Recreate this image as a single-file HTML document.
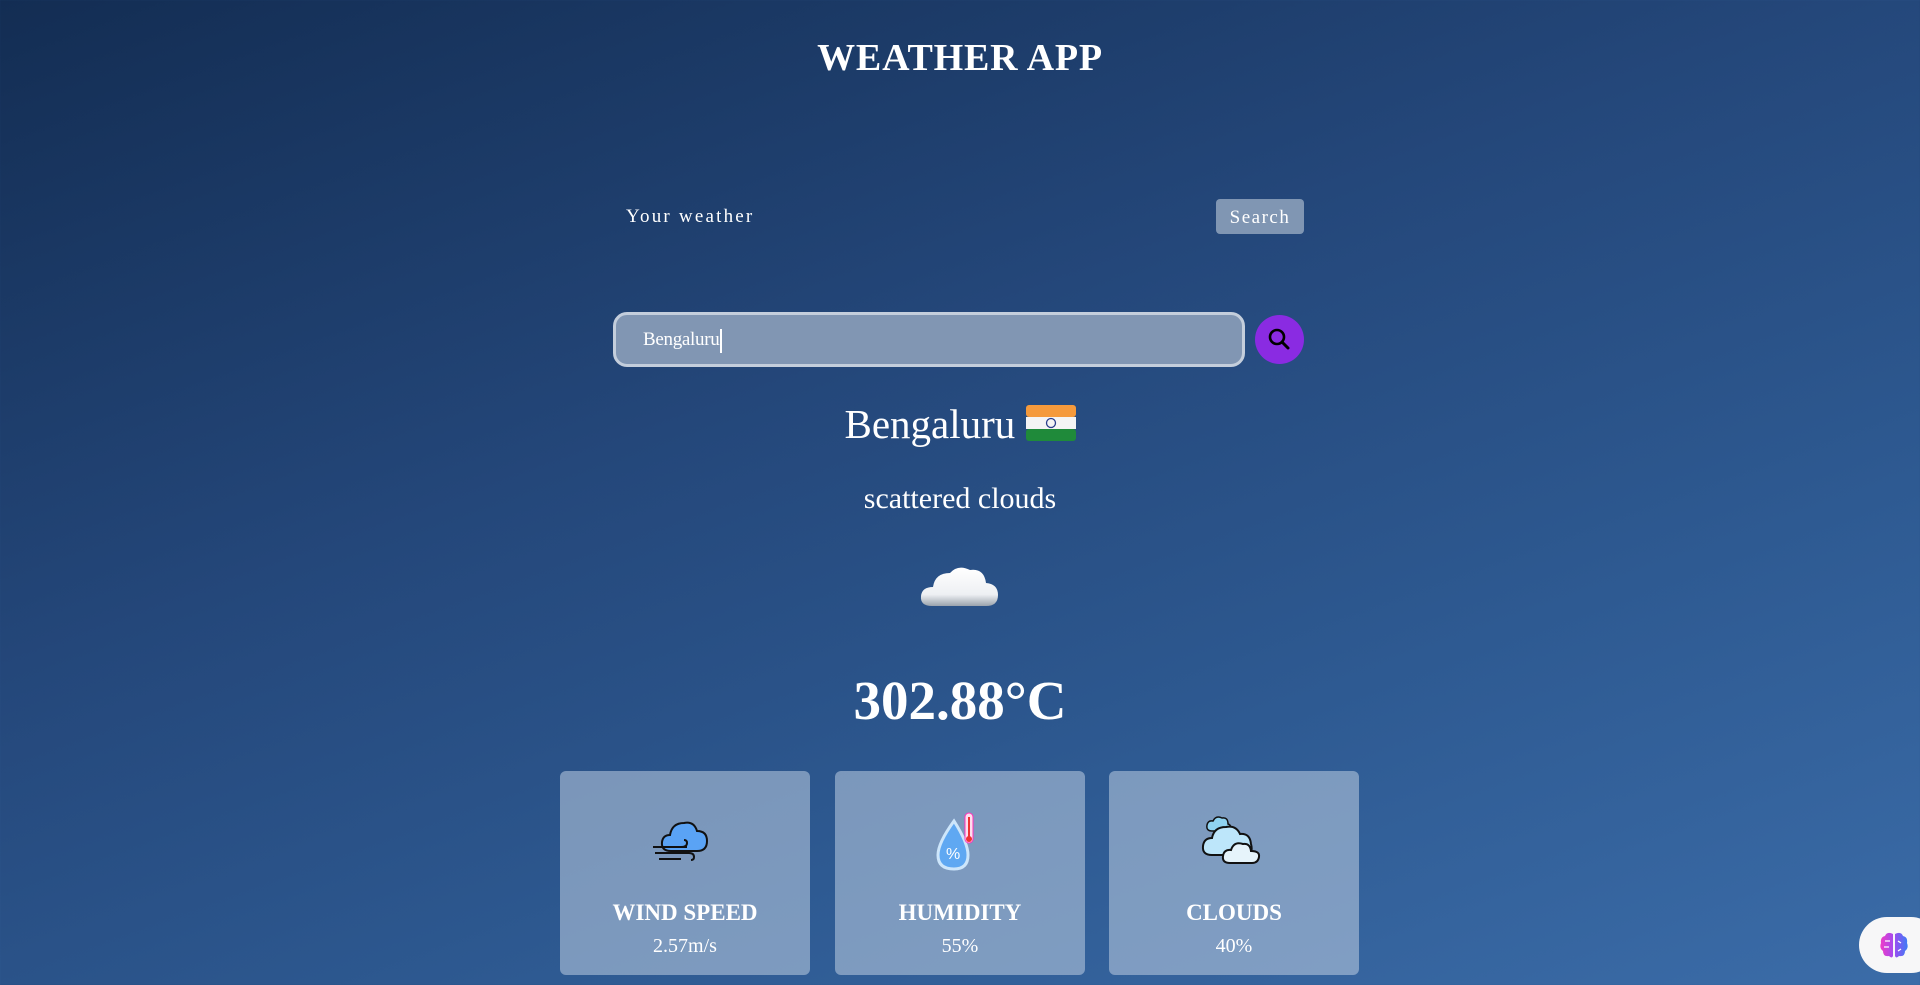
<!DOCTYPE html>
<html><head><meta charset="utf-8"><style>
*{margin:0;padding:0;box-sizing:border-box}
body{width:1920px;height:985px;overflow:hidden;position:relative;font-family:"Liberation Serif",serif;color:#fff;background:linear-gradient(160deg,#132d53 0%,#24477a 40%,#2e5a92 70%,#3b6ca8 100%)}
.a{position:absolute}
h1{position:absolute;top:36px;left:0;width:1920px;text-align:center;font-size:38px;font-weight:bold;letter-spacing:0.8px}
.yw{left:626px;top:206px;font-size:19px;letter-spacing:2.2px}
.sb{left:1216px;top:199px;width:88px;height:35px;background:#8096b3;border-radius:4px;font-size:19px;letter-spacing:1.5px;text-align:center;line-height:37px}
.inp{left:613px;top:312px;width:632px;height:55px;background:#8196b3;border:3px solid #c4cedc;border-radius:14px;font-size:19px;padding-left:27px;line-height:49px;letter-spacing:-0.3px}
.cur{display:inline-block;width:2px;height:24px;background:#fff;vertical-align:middle;margin-left:1px}
.btn{left:1255px;top:315px;width:49px;height:49px;border-radius:50%;background:#8a2be2}
.c{left:0;width:1920px;text-align:center}
.card{top:771px;width:250px;height:204px;background:rgba(190,205,225,0.55);border-radius:6px;text-align:center}
.card .l{position:absolute;top:129px;width:100%;font-size:23px;font-weight:bold}
.card .v{position:absolute;top:164px;width:100%;font-size:20px}
.card svg{position:absolute;left:91px;top:40px}
</style></head><body>
<h1>WEATHER APP</h1>
<div class="a yw">Your weather</div>
<div class="a sb">Search</div>
<div class="a inp">Bengaluru<span class="cur"></span></div>
<div class="a btn"><svg width="49" height="49" viewBox="0 0 49 49"><circle cx="22" cy="22" r="7" fill="none" stroke="#000" stroke-width="2.6"/><line x1="27" y1="27" x2="33" y2="33" stroke="#000" stroke-width="3" stroke-linecap="round"/></svg></div>
<div class="a c" style="top:400px;font-size:41px;font-family:'Liberation Serif','Noto Sans CJK JP',serif">Bengaluru <svg width="50" height="36" viewBox="0 0 50 36" style="vertical-align:-3px"><rect y="0" width="50" height="12" rx="3" fill="#f59a3c"/><rect y="12" width="50" height="12" fill="#f4f4f4"/><rect y="24" width="50" height="12" rx="3" fill="#1f8a3a"/><circle cx="25" cy="18" r="4.5" fill="none" stroke="#2a3e8c" stroke-width="1.3"/></svg></div>
<div class="a c" style="top:482px;font-size:30px">scattered clouds</div>
<div class="a" style="left:918px;top:556px"><svg width="84" height="56" viewBox="0 0 84 56"><defs><linearGradient id="g" x1="0" y1="0" x2="0" y2="1"><stop offset="0" stop-color="#fff"/><stop offset="0.7" stop-color="#eef0f3"/><stop offset="1" stop-color="#9aa3ad"/></linearGradient></defs><path d="M14 50 Q2 50 3 40 Q4 31 15 31 Q17 17 32 17 Q40 8 52 14 Q66 12 68 27 Q80 28 80 39 Q80 50 68 50 Z" fill="url(#g)"/></svg></div>
<div class="a c" style="top:669px;font-size:55px;font-weight:bold">302.88°C</div>

<div class="a card" style="left:560px"><svg width="68" height="60" viewBox="0 0 68 60"><path d="M20 40 Q10 40 11 31 Q12 24 19 24 Q21 12 33 12 Q43 10 46 20 Q56 20 56 30 Q56 40 46 40 Z" fill="#5aa3f5" stroke="#111" stroke-width="2"/><path d="M2 36 H36 M4 42 H38 M8 48 H30" stroke="#111" stroke-width="2" fill="none"/><path d="M30 36 q6 0 6-4 q0-3-3-3" stroke="#111" stroke-width="2" fill="none"/><path d="M38 42 q5 0 5 4 q0 3-3 3" stroke="#111" stroke-width="2" fill="none"/></svg><div class="l">WIND SPEED</div><div class="v">2.57m/s</div></div>
<div class="a card" style="left:835px"><svg width="68" height="66" viewBox="0 0 68 66"><path d="M28 10 Q12 32 12 44 Q12 58 28 58 Q42 58 42 44 Q42 32 28 10Z" fill="#5fa8f2" stroke="#cde6fb" stroke-width="3"/><text x="20" y="48" font-size="16" fill="#fff" font-family="Liberation Sans">%</text><rect x="39" y="2" width="8" height="30" rx="4" fill="#fde" stroke="#f3b" stroke-width="1"/><line x1="43" y1="6" x2="43" y2="26" stroke="#e33" stroke-width="2"/><circle cx="43" cy="28" r="3" fill="#e33"/></svg><div class="l">HUMIDITY</div><div class="v">55%</div></div>
<div class="a card" style="left:1109px"><svg width="68" height="60" viewBox="0 0 68 60"><path d="M12 20 Q6 20 7 14 Q8 9 13 10 Q16 4 22 7 Q28 6 28 13 Q32 14 30 20Z" fill="#8fd3f0" stroke="#111" stroke-width="1.5"/><path d="M12 44 Q2 44 3 35 Q4 27 12 27 Q14 16 26 16 Q36 14 40 23 Q50 22 51 33 Q54 44 44 44Z" fill="#bde6fa" stroke="#111" stroke-width="2"/><path d="M30 52 Q22 52 23 45 Q24 38 31 39 Q34 30 43 33 Q50 32 51 40 Q60 40 59 46 Q58 52 52 52Z" fill="#e6f4fb" stroke="#111" stroke-width="2"/></svg><div class="l">CLOUDS</div><div class="v">40%</div></div>

<div class="a" style="left:1859px;top:917px;width:80px;height:56px;background:#f7f7f8;border-radius:28px"><svg class="a" style="left:20px;top:14px" width="30" height="28" viewBox="0 0 30 28"><defs><linearGradient id="b" x1="0" x2="1"><stop offset="0" stop-color="#f03cc8"/><stop offset="0.5" stop-color="#a04cf0"/><stop offset="1" stop-color="#3c7cf5"/></linearGradient></defs><path d="M14 3 Q8 0 6 5 Q1 6 2 12 Q0 17 4 20 Q4 26 10 25 Q13 28 14 25Z M16 3 Q22 0 24 5 Q29 6 28 12 Q30 17 26 20 Q26 26 20 25 Q17 28 16 25Z" fill="url(#b)"/><path d="M6 10 H11 M5 16 H10 M19 10 l3 2 M22 18 l-3 2" stroke="#fff" stroke-width="1.3"/></svg></div>
</body></html>
